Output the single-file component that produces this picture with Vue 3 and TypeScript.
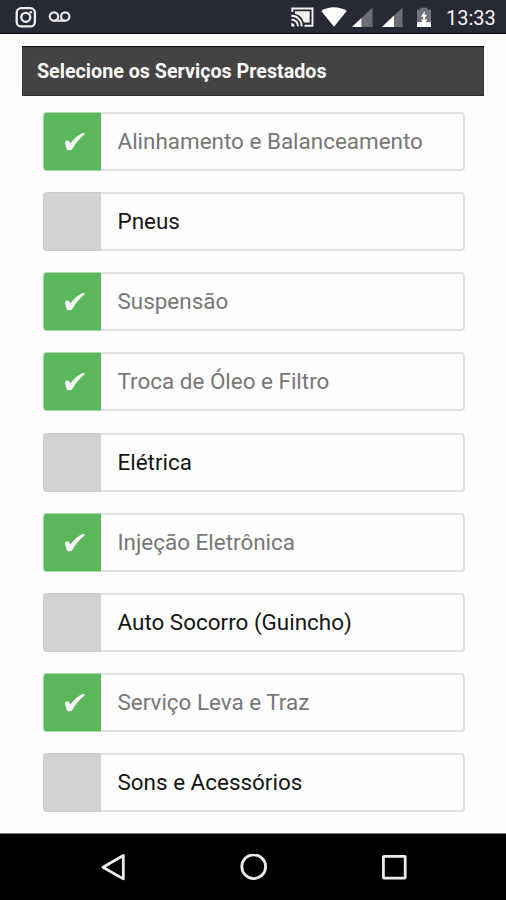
<script setup lang="ts">
interface Service {
  name: string
  selected: boolean
}

const services: Service[] = [
  { name: 'Alinhamento e Balanceamento', selected: true },
  { name: 'Pneus', selected: false },
  { name: 'Suspensão', selected: true },
  { name: 'Troca de Óleo e Filtro', selected: true },
  { name: 'Elétrica', selected: false },
  { name: 'Injeção Eletrônica', selected: true },
  { name: 'Auto Socorro (Guincho)', selected: false },
  { name: 'Serviço Leva e Traz', selected: true },
  { name: 'Sons e Acessórios', selected: false },
]
</script>

<template>
  <div class="screen">
    <header class="status">
      <svg class="insta" width="22" height="22" viewBox="0 0 22 22" fill="none" stroke="#ededed">
        <rect x="1.7" y="1.2" width="18.2" height="18.2" rx="4.5" stroke-width="2.3" />
        <circle cx="10.8" cy="10.3" r="4.5" stroke-width="2.3" />
        <circle cx="15.8" cy="5.3" r="1.3" fill="#ededed" stroke="none" />
      </svg>
      <svg class="voicemail" width="24" height="12" viewBox="0 0 24 12" fill="none" stroke="#e6e6e6" stroke-width="2.2">
        <circle cx="6" cy="5.5" r="4.2" />
        <circle cx="17.2" cy="5.5" r="4.2" />
        <path d="M6 9.7H17.2" />
      </svg>
      <span class="spacer"></span>
      <svg class="cast" width="24" height="20" viewBox="0 0 24 20" fill="none" stroke="#f2f2f2">
        <path d="M2.3 5V1.5H22.5V18.7H14.5" stroke-width="1.9" />
        <path d="M5 4.3H19.7V15.5H13.8C12.4 10.4 9 7.6 5 7Z" fill="#f2f2f2" stroke="none" />
        <path d="M1.3 8.8A10 10 0 0 1 11.6 19.4M1.3 12.6A6.3 6.3 0 0 1 7.9 19.4" stroke-width="1.9" />
        <path d="M1.3 16A3.5 3.5 0 0 1 4.6 19.5H1.3Z" fill="#f2f2f2" stroke="none" />
      </svg>
      <svg class="wifi" width="26" height="20" viewBox="0 0 26 20">
        <path d="M.3 4C7.5-1 18.5-1 25.7 4L13 19.7Z" fill="#fff" />
      </svg>
      <svg class="signal" width="21" height="20" viewBox="0 0 21 20">
        <path d="M20.5 .5V20H0Z" fill="#6c6d74" />
        <path d="M9.4 11V20H0Z" fill="#fff" />
      </svg>
      <svg class="signal" width="21" height="20" viewBox="0 0 21 20">
        <path d="M20.5 .5V20H0Z" fill="#6c6d74" />
        <path d="M12 8.5V20H0Z" fill="#fff" />
      </svg>
      <svg class="battery" width="16" height="20" viewBox="0 0 16 20">
        <path d="M1 2.8H4.5V.8H11.5V2.8H15V15H1Z" fill="#73747a" />
        <path d="M1 15H15V20H1Z" fill="#fff" />
        <path d="M8.6 4.2L5 9.8H7.2V12.5H5L7 15.5H9.5L11.3 12.5H9V10.6L11 7.7H8.6Z" fill="#fff" />
      </svg>
      <span class="clock">13:33</span>
    </header>

    <main class="content">
      <h1 class="title"><span>Selecione os Serviços Prestados</span></h1>
      <ul class="list">
        <li v-for="service in services" :key="service.name" class="row" :class="{ selected: service.selected }">
          <span class="box">
            <svg v-if="service.selected" width="22" height="20" viewBox="0 0 22 20">
              <path d="M1.2 9.8C1.5 8.3 4.3 8.1 5 9.3L6.3 11.6C9.6 7 14 3 17.8 1.4C19.8.7 21 1.3 20.6 2.6C15.8 6.2 11.4 11.6 8.4 16.7C7.2 18.6 3.6 19 2.8 17.2C2 15.2 1.2 12.2 1.2 9.8Z" fill="#fff" />
            </svg>
          </span>
          <span class="name"><span>{{ service.name }}</span></span>
        </li>
      </ul>
    </main>

    <nav class="nav">
      <svg width="28" height="28" viewBox="0 0 28 28"><path d="M23.3 1.5V24.9L3 13.2Z" /></svg>
      <svg width="28" height="28" viewBox="0 0 28 28"><circle cx="13.7" cy="12.7" r="11.9" /></svg>
      <svg width="28" height="28" viewBox="0 0 28 28"><rect x="3.4" y="2.3" width="21.8" height="21.8" rx=".5" /></svg>
    </nav>
  </div>
</template>

<style>
body {
  margin: 0;
  background: #fefefe;
}
</style>

<style scoped>
.screen {
  display: flex;
  flex-direction: column;
  box-sizing: border-box;
  width: 506px;
  height: 900px;
  overflow: hidden;
  background: #fefefe;
  font-family: Roboto, 'Liberation Sans', sans-serif;
}

.status {
  display: flex;
  align-items: flex-start;
  box-sizing: border-box;
  height: 34px;
  padding: 7px 11px 0 15px;
  border-bottom: 1px solid #08080c;
  background: #272934;
}

.status svg {
  flex: none;
}

.voicemail {
  margin: 4px 0 0 11px;
}

.spacer {
  flex: 1;
}

.wifi {
  margin-left: 7px;
}

.signal {
  margin-left: 5px;
}

.signal + .signal {
  margin-left: 9px;
}

.battery {
  margin-left: 13px;
}

.clock {
  width: 49px;
  margin: -1px 0 0 14px;
  color: #f3f3f3;
  font-size: 20px;
  line-height: 24px;
  white-space: nowrap;
}

.content {
  flex: 1;
  padding: 12px 22.5px 0 22px;
}

.title {
  display: flex;
  align-items: center;
  box-sizing: border-box;
  height: 49.5px;
  margin: 0;
  padding: 1px 0 0 14px;
  border: 1px solid #333;
  border-top-color: #0c0c0c;
  background: #434343;
  color: #fafafa;
  font-size: 19.7px;
  font-weight: 700;
  white-space: nowrap;
}

.list {
  display: grid;
  grid-auto-rows: 59px;
  gap: 21.15px;
  margin: 16.5px 19px 0 20.5px;
  padding: 0;
  list-style: none;
}

.row {
  display: flex;
  color: #151515;
}

.box {
  display: flex;
  align-items: center;
  justify-content: center;
  box-sizing: border-box;
  flex: none;
  width: 58px;
  padding: 1px 0 0 6px;
  border: 1px solid #c9cbcd;
  border-right: 0;
  border-radius: 4px 0 0 4px;
  background: #d0d2d4;
}

.selected {
  color: #777;
}

.selected .box {
  border-color: #a9d6ab;
  background: #5ab75c;
}

.name {
  display: flex;
  flex: 1;
  align-items: center;
  box-sizing: border-box;
  padding: 0 0 1px 17px;
  border: 2px solid #e0e1e1;
  border-left: 0;
  border-radius: 0 4px 4px 0;
  font-size: 22.45px;
  white-space: nowrap;
}

.nav {
  display: flex;
  justify-content: space-between;
  box-sizing: border-box;
  height: 67px;
  padding: 20px 98px 0 100px;
  border-top: 1px solid #777;
  background: #000;
}

.nav svg {
  fill: none;
  stroke: #ececec;
  stroke-width: 2.8;
  stroke-linejoin: round;
}
</style>
